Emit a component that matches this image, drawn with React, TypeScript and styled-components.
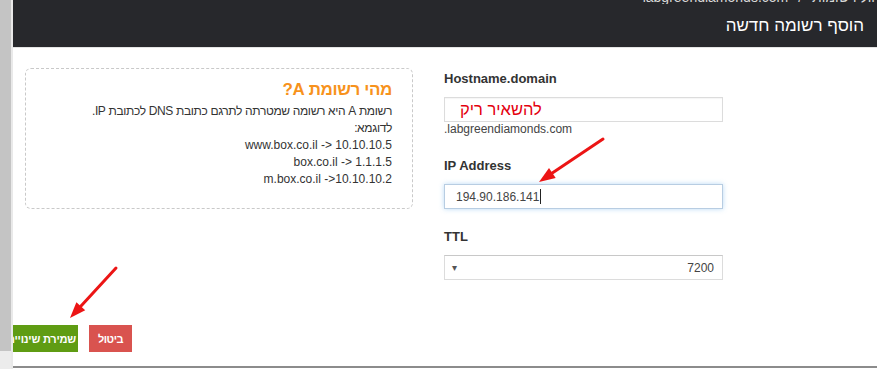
import React from "react"
import styled, { createGlobalStyle } from "styled-components"

const GlobalStyle = createGlobalStyle`
  body {
    margin: 0;
    background: #fff;
    font-family: "Liberation Sans", Arial, sans-serif;
  }
`

const AddRecordModal = () => {
  return (
    <Page>
      <GlobalStyle />
      <SideStrip />
      <Modal>
        <Header>
          <Crumbs>
            <span>ניהול רשומות</span>
            <span>/</span>
            <span>labgreendiamonds.com</span>
          </Crumbs>
          <Title>הוסף רשומה חדשה</Title>
        </Header>

        <Body>
          <InfoBox>
            <InfoTitle>מהי רשומת A?</InfoTitle>
            <InfoLine $hebrew>רשומת A היא רשומה שמטרתה לתרגם כתובת DNS לכתובת IP.</InfoLine>
            <InfoLine $hebrew>לדוגמא:</InfoLine>
            <InfoLine>www.box.co.il -&gt; 10.10.10.5</InfoLine>
            <InfoLine>box.co.il -&gt; 1.1.1.5</InfoLine>
            <InfoLine>m.box.co.il -&gt;10.10.10.2</InfoLine>
          </InfoBox>

          <Form>
            <Label>Hostname.domain</Label>
            <Field>
              <Note>להשאיר ריק</Note>
            </Field>
            <Hint>.labgreendiamonds.com</Hint>

            <Label $spaced>IP Address</Label>
            <Field $focused>
              194.90.186.141
              <Caret />
            </Field>

            <Label $spaced>TTL</Label>
            <Select>
              <SelectArrow>▾</SelectArrow>
              <span>7200</span>
            </Select>
          </Form>
        </Body>

        <Footer>
          <SaveButton>שמירת שינויים</SaveButton>
          <CancelButton>ביטול</CancelButton>
        </Footer>
      </Modal>

      {/* annotation arrows drawn over the screenshot */}
      <Arrows viewBox="0 0 877 369">
        <line x1="603" y1="139" x2="552.3" y2="173.1" />
        <polygon points="539,182 555.7,178.1 549,168.1" />
        <line x1="116" y1="268" x2="80.8" y2="306.2" />
        <polygon points="70,318 85.2,310.3 76.4,302.2" />
      </Arrows>
    </Page>
  )
}

const Page = styled.div`
  position: relative;
  display: flex;
  width: 877px;
  height: 369px;
  overflow: hidden;
`

const SideStrip = styled.div`
  flex: none;
  width: 11px;
  height: 100%;
  border-right: 2px solid #e9e9e9;
  background: linear-gradient(#c4c4c4 0 351px, #ececec 351px);
`

const Modal = styled.div`
  flex: 1;
  display: flex;
  flex-direction: column;
  height: 368px;
  box-sizing: border-box;
  border-bottom: 2px solid #8c8c8c;
  overflow: hidden;
  background: #fff;
`

const Header = styled.div`
  flex: none;
  height: 47px;
  display: flex;
  flex-direction: column;
  background: #27282c;
  border-bottom: 1px solid #e4e4e4;
  direction: rtl;
`

// breadcrumb of the page behind, only its lower edge shows
const Crumbs = styled.div`
  height: 4px;
  overflow: hidden;
  display: flex;
  gap: 10px;
  margin-right: -12px;
  color: #d8d8d8;
  font-size: 14px;
  line-height: 14px;

  span {
    margin-top: -10px;
  }
`

const Title = styled.div`
  flex: 1;
  display: flex;
  align-items: center;
  padding: 0 13px 0 0;
  color: #fff;
  font-size: 17px;
`

const Body = styled.div`
  flex: 1;
  display: flex;
  align-items: flex-start;
  gap: 31px;
  padding: 20px 0 0 12px;
`

const InfoBox = styled.div`
  flex: none;
  width: 388px;
  height: 141px;
  box-sizing: border-box;
  padding: 10px 20px 0;
  border: 1px dashed #c9c9c9;
  border-radius: 6px;
  direction: rtl;
  color: #333;
`

const InfoTitle = styled.div`
  color: #f7921c;
  font-size: 17px;
  font-weight: bold;
  letter-spacing: -0.4px;
  line-height: 22px;
  margin-bottom: 2px;
`

const InfoLine = styled.div<{ $hebrew?: boolean }>`
  font-size: 12px;
  line-height: 17px;
  letter-spacing: ${(p) => (p.$hebrew ? "-0.35px" : "0")};
`

const Form = styled.div`
  flex: none;
  width: 279px;
  padding-top: 2px;
  display: flex;
  flex-direction: column;
`

const Label = styled.div<{ $spaced?: boolean }>`
  color: #333;
  font-size: 13px;
  font-weight: bold;
  line-height: 18px;
  margin: ${(p) => (p.$spaced ? "19px" : "0")} 0 9px;
`

const Field = styled.div<{ $focused?: boolean }>`
  height: 25px;
  box-sizing: border-box;
  display: flex;
  align-items: center;
  padding: 0 11px;
  border: 1px solid ${(p) => (p.$focused ? "#b8cde2" : "#dcdcdc")};
  box-shadow: ${(p) =>
    p.$focused ? "0 0 5px rgba(102, 175, 233, 0.45)" : "inset 0 1px 1px rgba(0,0,0,0.04)"};
  color: #444;
  font-size: 12px;
`

const Note = styled.span`
  margin-left: 4px;
  color: #e4000f;
  font-size: 16.5px;
  direction: rtl;
`

const Caret = styled.span`
  width: 1px;
  height: 15px;
  margin-left: 1px;
  background: #222;
`

const Hint = styled.div`
  color: #444;
  font-size: 12px;
  line-height: 15px;
  margin-bottom: 1px;
`

const Select = styled.div`
  height: 25px;
  box-sizing: border-box;
  display: flex;
  align-items: center;
  justify-content: space-between;
  padding: 0 8px 0 7px;
  border: 1px solid #dcdcdc;
  border-top-color: #c8c8c8;
  color: #444;
  font-size: 12px;
`

const SelectArrow = styled.span`
  font-size: 10px;
  color: #555;
`

const Footer = styled.div`
  flex: none;
  display: flex;
  gap: 11px;
  padding-bottom: 14px;
`

const ButtonBase = styled.div`
  height: 27px;
  box-sizing: border-box;
  display: flex;
  align-items: center;
  color: #fff;
  font-size: 11px;
  font-weight: bold;
  letter-spacing: -0.5px;
  white-space: nowrap;
  direction: rtl;
`

// the save button runs past the modal's left edge, so its text is clipped
const SaveButton = styled(ButtonBase)`
  width: 65px;
  overflow: hidden;
  padding-right: 2px;
  letter-spacing: -0.2px;
  background: #5f9c13;
`

const CancelButton = styled(ButtonBase)`
  padding: 0 9px;
  background: #d9534f;
`

const Arrows = styled.svg`
  position: absolute;
  top: 0;
  left: 0;
  width: 877px;
  height: 369px;
  pointer-events: none;

  line {
    stroke: #ec1515;
    stroke-width: 3;
    stroke-linecap: round;
  }
  polygon {
    fill: #ec1515;
  }
`

export default AddRecordModal
